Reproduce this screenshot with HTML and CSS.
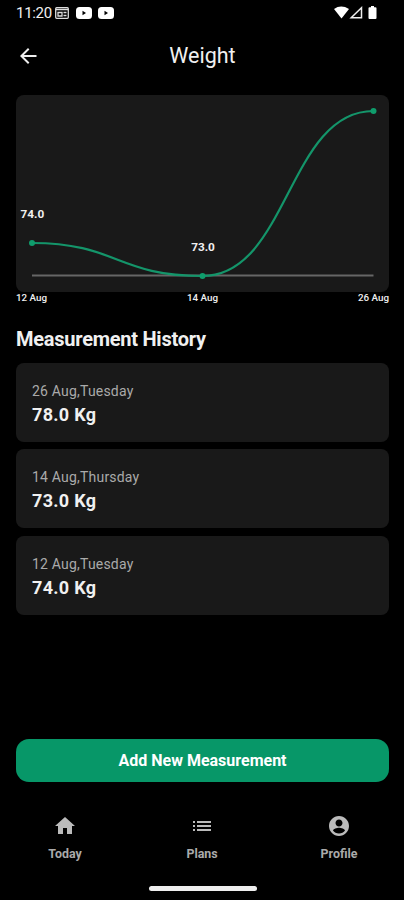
FILE: index.html
```html
<!DOCTYPE html>
<html lang="en">
	<head>
		<meta charset="UTF-8">
		<title>Weight</title>
		<link rel="stylesheet" href="styles.css">
	</head>
	<body>
		<div id="wrap">
			<div class="status">
				<span class="time">11:20</span>
				<svg class="news" width="14" height="12" viewBox="0 0 14 12">
					<rect x="0.7" y="0.7" width="12.6" height="10.6" rx="1" fill="none" stroke="#ddd" stroke-width="1.3"/>
					<path d="M1 2.500h12M3 5.500h4v3.500H3zM8.500 5.500h3M8.500 8.500h3" fill="none" stroke="#ddd" stroke-width="1.3"/>
				</svg>
				<svg class="tube" width="16" height="12" viewBox="0 0 16 12">
					<rect width="16" height="12" rx="3.5" fill="#fff"/>
					<path d="M6.5 3.8v4.4L10 6z" fill="#000"/>
				</svg>
				<svg class="tube" width="16" height="12" viewBox="0 0 16 12">
					<rect width="16" height="12" rx="3.5" fill="#fff"/>
					<path d="M6.5 3.8v4.4L10 6z" fill="#000"/>
				</svg>
				<svg class="signal" width="44" height="14" viewBox="0 0 44 14">
					<path d="M0 3Q7-1.8 15 3L7.5 12.5z" fill="#fff"/>
					<path d="M27.5 1.8v10H17.2z" fill="none" stroke="#eee" stroke-width="1.5"/>
					<path d="M37 0h3v1.200h1.500q1 0 1 1v9.800q0 1-1 1h-6q-1 0-1-1V2.200q0-1 1-1H37z" fill="#fff"/>
				</svg>
			</div>
			<div class="header">
				<svg class="back" width="24" height="24" viewBox="0 0 24 24">
					<path d="M20.500 11H7.830l5.590-5.590L12 4l-8 8 8 8 1.410-1.410L7.830 13H20.500z" fill="#eee"/>
				</svg>
				<h1>Weight</h1>
			</div>
			<div class="chart">
				<svg width="373" height="197" viewBox="0 0 373 197">
					<path class="axis" d="M16 180.500H357.500"/>
					<path class="line" d="M16 148C101 148 101 181 186.500 181C272 181 272 16 357.500 16"/>
					<circle cx="16" cy="148" r="3"/>
					<circle cx="186.500" cy="181" r="3"/>
					<circle cx="357.500" cy="16" r="3"/>
					<text x="16.300" y="123">74.0</text>
					<text x="187" y="156">73.0</text>
				</svg>
			</div>
			<div class="dates">
				<span>12 Aug</span>
				<span>14 Aug</span>
				<span>26 Aug</span>
			</div>
			<h2>Measurement History</h2>
			<ul id="list">
				<li>
					<p>26 Aug,Tuesday</p>
					<strong>78.0 Kg</strong>
				</li>
				<li>
					<p>14 Aug,Thursday</p>
					<strong>73.0 Kg</strong>
				</li>
				<li>
					<p>12 Aug,Tuesday</p>
					<strong>74.0 Kg</strong>
				</li>
			</ul>
			<button class="add">Add New Measurement</button>
			<div class="nav">
				<a>
					<svg width="24" height="24" viewBox="0 0 24 24">
						<path d="M10 20v-6h4v6h5v-8h3L12 3 2 12h3v8z"/>
					</svg>
					<span>Today</span>
				</a>
				<a>
					<svg width="24" height="24" viewBox="0 0 24 24">
						<path d="M3 13h2v-2H3v2zm0 4h2v-2H3v2zm0-8h2V7H3v2zm4 4h14v-2H7v2zm0 4h14v-2H7v2zM7 7v2h14V7H7z"/>
					</svg>
					<span>Plans</span>
				</a>
				<a>
					<svg width="24" height="24" viewBox="0 0 24 24">
						<path d="M12 2C6.480 2 2 6.480 2 12s4.480 10 10 10 10-4.480 10-10S17.520 2 12 2zm0 3.500c1.930 0 3.500 1.570 3.500 3.500s-1.570 3.500-3.500 3.500S8.500 10.930 8.500 9s1.570-3.500 3.500-3.500zM12 19.500c-2.500 0-4.710-1.130-6-3 .03-1.700 4-2.800 6-2.800s5.970 1.100 6 2.800c-1.290 1.870-3.500 3-6 3z"/>
					</svg>
					<span>Profile</span>
				</a>
			</div>
			<div class="bar"></div>
		</div>
	</body>
</html>
```

FILE: styles.css
```css
body {
	margin: 0;
	padding: 0;
	background: #000;
	color: #f0f0f0;
	font-family: Roboto, "Liberation Sans", sans-serif;
}
h1, h2, p, ul {
	margin: 0;
	padding: 0;
	list-style: none;
}
svg {
	display: block;
}
#wrap {
	box-sizing: border-box;
	width: 404px;
	height: 900px;
	padding: 0 15px 0 16px;
	overflow: hidden;
	display: flex;
	flex-direction: column;
}
.status {
	height: 25px;
	display: flex;
	align-items: center;
}
.time {
	width: 39px;
	font-size: 15px;
	letter-spacing: -0.3px;
}
.news {
	margin-right: 7px;
}
.tube {
	margin-right: 6px;
}
.signal {
	margin-left: auto;
	margin-right: 11px;
}
.header {
	height: 62px;
	margin-bottom: 8px;
	display: grid;
	grid-template-columns: 24px 1fr 24px;
	align-items: center;
}
h1 {
	font-size: 21.5px;
	font-weight: 400;
	line-height: 28px;
	text-align: center;
}
.chart {
	height: 197px;
	background: #191919;
	border-radius: 8px;
}
.chart .axis {
	stroke: #666;
	stroke-width: 1.8;
}
.chart .line {
	fill: none;
	stroke: #14956a;
	stroke-width: 2.2;
}
.chart circle {
	fill: #0f9d6c;
}
.chart text {
	fill: #f0f0f0;
	font-size: 11.8px;
	font-weight: 700;
	text-anchor: middle;
}
.dates {
	height: 12px;
	display: flex;
	justify-content: space-between;
	font-size: 9.8px;
	font-weight: 500;
	line-height: 12px;
}
h2 {
	margin: 22px 0 10.5px;
	font-size: 20px;
	font-weight: 700;
	line-height: 26px;
	letter-spacing: -0.25px;
}
#list li {
	box-sizing: border-box;
	height: 79px;
	margin-bottom: 7.7px;
	padding: 18px 16px;
	background: #191919;
	border-radius: 8px;
}
#list p {
	color: #aaa;
	font-size: 14px;
	line-height: 20px;
	letter-spacing: 0.2px;
}
#list strong {
	display: block;
	font-size: 18px;
	line-height: 27px;
	letter-spacing: 0.3px;
}
.add {
	height: 43px;
	flex-shrink: 0;
	margin-top: auto;
	padding: 0;
	border: none;
	border-radius: 13px;
	background: #079768;
	color: #fff;
	font-family: inherit;
	font-size: 16px;
	font-weight: 700;
	line-height: 44px;
}
.nav {
	height: 70px;
	margin: 32px -15px 0 -16px;
	display: flex;
	justify-content: space-between;
	color: #aaa;
	font-size: 12.4px;
	font-weight: 700;
}
.nav a {
	width: 130px;
	display: flex;
	flex-direction: column;
	align-items: center;
}
.nav svg {
	margin-bottom: 8px;
	fill: #bbb;
}
.bar {
	width: 108px;
	height: 5px;
	margin: 2px auto 9px;
	flex-shrink: 0;
	border-radius: 3px;
	background: #eee;
}
```
